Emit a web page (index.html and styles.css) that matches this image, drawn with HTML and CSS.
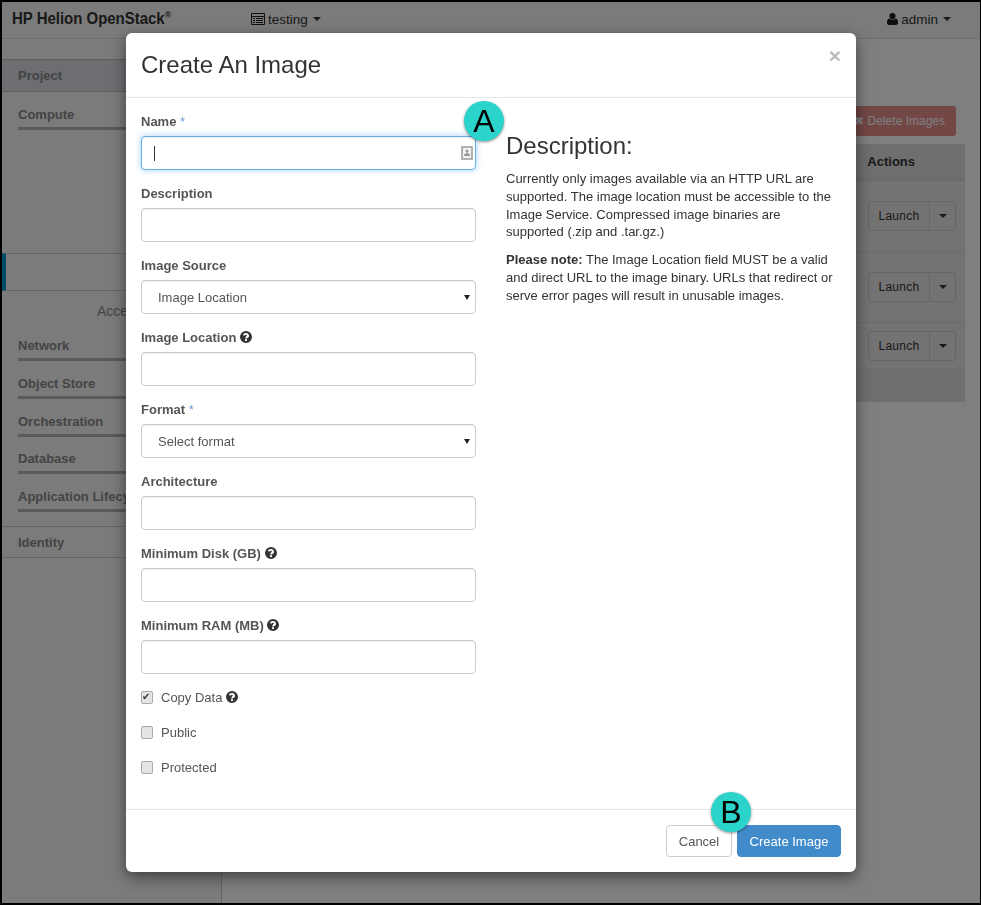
FILE: index.html
```html
<!DOCTYPE html>
<html lang="en">
<head>
<meta charset="UTF-8">
<meta name="viewport" content="width=device-width, initial-scale=1.0">
<title>Create An Image</title>
<link rel="stylesheet" href="styles.css">
</head>
<body>
<div class="frame">
    <header class="navbar">
        <div class="brand">HP Helion OpenStack<sup>®</sup></div>
        <div class="project-picker">
            <svg class="nav-icon" viewBox="0 0 14 12" width="14" height="12"><path fill="#1c1c1c" d="M1 0h12a1 1 0 0 1 1 1v10a1 1 0 0 1-1 1H1a1 1 0 0 1-1-1V1a1 1 0 0 1 1-1zm0 1v2h12V1H1zm0 3v7h12V4H1zm1 1h2v1H2V5zm3 0h7v1H5V5zM2 7h2v1H2V7zm3 0h7v1H5V7zM2 9h2v1H2V9zm3 0h7v1H5V9z"/></svg>
            testing <span class="caret"></span>
        </div>
        <div class="user-menu">
            <svg class="nav-icon" viewBox="0 0 11 12" width="11" height="12"><path fill="#1c1c1c" d="M5.500 0a3 3 0 0 1 3 3.200 3 3 0 0 1-6 0 3 3 0 0 1 3-3.200zM2.300 5.600c.8.800 1.900 1.200 3.200 1.200s2.400-.4 3.200-1.200C10.200 5.800 11 7.200 11 9.800c0 1.300-.8 2.200-2 2.200H2c-1.200 0-2-.9-2-2.200 0-2.600.8-4 2.300-4.200z"/></svg>
            admin <span class="caret"></span>
        </div>
    </header>
    <div class="main">
        <nav class="sidebar">
            <div class="side-head">Project</div>
            <div class="side-group">Compute</div>
            <div class="side-active"></div>
            <div class="side-sub">Access &amp; Security</div>
            <div class="side-item">Network</div>
            <div class="side-item">Object Store</div>
            <div class="side-item">Orchestration</div>
            <div class="side-item">Database</div>
            <div class="side-item">Application Lifecycle</div>
            <div class="side-identity">Identity</div>
        </nav>
        <section class="content">
            <div class="table-actions">
                <button class="btn-danger" disabled>✖ Delete Images</button>
            </div>
            <div class="images-table">
                <div class="table-head">Actions</div>
                <div class="table-row"><div class="split"><span>Launch</span><span class="split-caret"><span class="caret"></span></span></div></div>
                <div class="table-row"><div class="split"><span>Launch</span><span class="split-caret"><span class="caret"></span></span></div></div>
                <div class="table-row short"><div class="split"><span>Launch</span><span class="split-caret"><span class="caret"></span></span></div></div>
                <div class="table-foot"></div>
            </div>
        </section>
    </div>
</div>

<div class="backdrop"></div>

<div class="modal">
    <div class="modal-header">
        <h3>Create An Image</h3>
        <span class="close">×</span>
    </div>
    <div class="modal-body">
        <form class="image-form">
            <div class="form-group">
                <label>Name <span class="req">*</span></label>
                <div class="input-wrap">
                    <input type="text" class="focused">
                    <span class="text-cursor"></span>
                    <svg class="contact-icon" viewBox="0 0 12 14" width="12" height="14"><path fill="#f2f2f2" stroke="#999" stroke-width="1.500" d="M1 1h10v12H1z"/><path fill="#999" d="M6 3.500a1.500 1.500 0 1 1 0 3 1.500 1.500 0 0 1 0-3zM3 10c0-1.800 1.200-3 3-3s3 1.200 3 3z"/></svg>
                </div>
            </div>
            <div class="form-group">
                <label>Description</label>
                <input type="text">
            </div>
            <div class="form-group">
                <label>Image Source</label>
                <div class="select-wrap">
                    <select><option>Image Location</option></select>
                </div>
            </div>
            <div class="form-group">
                <label>Image Location <svg class="help" viewBox="0 0 12 12" width="12" height="12"><use href="#help-icon"/></svg></label>
                <input type="text">
            </div>
            <div class="form-group">
                <label>Format <span class="req">*</span></label>
                <div class="select-wrap">
                    <select><option>Select format</option></select>
                </div>
            </div>
            <div class="form-group">
                <label>Architecture</label>
                <input type="text">
            </div>
            <div class="form-group">
                <label>Minimum Disk (GB) <svg class="help" viewBox="0 0 12 12" width="12" height="12"><use href="#help-icon"/></svg></label>
                <input type="text">
            </div>
            <div class="form-group">
                <label>Minimum RAM (MB) <svg class="help" viewBox="0 0 12 12" width="12" height="12"><use href="#help-icon"/></svg></label>
                <input type="text">
            </div>
            <label class="check-row"><input type="checkbox" checked> Copy Data <svg class="help" viewBox="0 0 12 12" width="12" height="12"><use href="#help-icon"/></svg></label>
            <label class="check-row"><input type="checkbox"> Public</label>
            <label class="check-row"><input type="checkbox"> Protected</label>
        </form>
        <div class="description">
            <h3>Description:</h3>
            <p>Currently only images available via an HTTP URL are supported. The image location must be accessible to the Image Service. Compressed image binaries are supported (.zip and .tar.gz.)</p>
            <p><strong>Please note:</strong> The Image Location field MUST be a valid and direct URL to the image binary. URLs that redirect or serve error pages will result in unusable images.</p>
        </div>
    </div>
    <div class="modal-footer">
        <button class="btn-cancel">Cancel</button>
        <button class="btn-primary">Create Image</button>
    </div>
    <div class="callout callout-a">A</div>
    <div class="callout callout-b">B</div>
</div>

<svg class="defs" width="0" height="0">
    <symbol id="help-icon" viewBox="0 0 12 12">
        <path fill="#333" fill-rule="evenodd" d="M6 0a6 6 0 1 1 0 12A6 6 0 0 1 6 0zM5 8.300v1.700h2V8.300H5zM6 2C4.500 2 3.400 2.700 3 3.900l1.500.8c.2-.6.700-1 1.400-1 .6 0 1 .3 1 .7 0 .5-.4.700-.9 1C5.300 6.800 5 7.200 5 7.600h2c0-.3.200-.5.700-.8.700-.4 1.300-1 1.300-1.900C9 3.100 7.600 2 6 2z"/>
    </symbol>
</svg>
</body>
</html>
```
FILE: styles.css
```css
* {
    box-sizing: border-box;
}
body {
    margin: 0;
    font-family: "Liberation Sans", Arial, sans-serif;
    font-size: 13px;
    color: #333;
    background-color: #fff;
}
.frame {
    display: flex;
    flex-direction: column;
    width: 981px;
    height: 905px;
    border: solid #000;
    border-width: 2px 1px 2px 2px;
    overflow: hidden;
}
.navbar {
    display: flex;
    align-items: center;
    flex-shrink: 0;
    height: 37px;
    padding-bottom: 2px;
    background-color: #f6f6f6;
    border-bottom: 1px solid #ddd;
    color: #333;
}
.brand {
    flex-shrink: 0;
    width: 249px;
    padding-left: 10.700px;
    font-size: 16px;
    font-weight: bold;
    white-space: nowrap;
    transform: scaleX(0.935);
    transform-origin: left center;
}
.brand sup {
    font-size: 9px;
    line-height: 0;
}
.project-picker {
    display: flex;
    align-items: center;
    gap: 3px;
    font-size: 13.500px;
}
.user-menu {
    display: flex;
    align-items: center;
    gap: 3px;
    margin-left: auto;
    margin-right: 29px;
    font-size: 13.500px;
}
.caret {
    display: inline-block;
    width: 0;
    height: 0;
    margin-left: 2px;
    border-top: 4px solid #333;
    border-left: 4px solid transparent;
    border-right: 4px solid transparent;
}
.main {
    display: flex;
    flex: 1;
}
.sidebar {
    flex-shrink: 0;
    width: 220px;
    border-right: 1px solid #ccc;
    background-color: #f6f6f6;
    color: #888;
    font-weight: bold;
}
.side-head {
    height: 33px;
    margin-top: 20px;
    padding: 6px 16px 4px;
    line-height: 20px;
    background-color: #d8dde3;
    border-top: 1px solid #bbb;
    border-bottom: 1px solid #bbb;
}
.side-group {
    margin: 13px 0 123px 16px;
    padding-bottom: 2px;
    line-height: 20px;
    border-bottom: 3px solid #b5b5b5;
}
.side-active {
    height: 38px;
    border-top: 1px solid #ccc;
    border-bottom: 1px solid #ccc;
    border-left: 4px solid #0096d6;
}
.side-sub {
    margin-top: 10px;
    padding-left: 95px;
    line-height: 20px;
    font-size: 14px;
    font-weight: normal;
}
.side-item {
    height: 37.750px;
    margin-left: 16px;
    padding-top: 1px;
    line-height: 20px;
    white-space: nowrap;
}
.side-item::after {
    content: "";
    display: block;
    height: 3px;
    margin-top: 2px;
    background-color: #b5b5b5;
}
.side-sub + .side-item {
    margin-top: 14px;
}
.side-identity {
    height: 32px;
    margin-top: 2px;
    padding: 6px 16px 4px;
    line-height: 20px;
    border-top: 1px solid #ccc;
    border-bottom: 1px solid #ccc;
}
.content {
    flex: 1;
    padding: 67px 15px 0 0;
    background-color: #fff;
}
.table-actions {
    display: flex;
    justify-content: flex-end;
    height: 38px;
    padding-right: 9px;
}
.btn-danger {
    height: 30px;
    width: 150px;
    padding: 0 11px;
    border: 0;
    border-radius: 3px;
    background-color: #d9534f;
    color: #fff;
    font: inherit;
    font-size: 12px;
    text-align: right;
    opacity: 0.65;
}
.images-table {
    border: 1px solid #ddd;
    background-color: #e7e7e7;
}
.table-head {
    height: 36px;
    padding-right: 49px;
    line-height: 33px;
    font-weight: bold;
    text-align: right;
    background-color: #dfdfdf;
    border-bottom: 3px double #ccc;
}
.table-row {
    display: flex;
    align-items: center;
    justify-content: flex-end;
    height: 71px;
    padding-right: 8px;
    border-bottom: 1px solid #d6d6d6;
}
.table-row.short {
    height: 47px;
}
.table-foot {
    height: 31px;
    background-color: #dfdfdf;
}
.split {
    display: flex;
    height: 30px;
    width: 88px;
    border: 1px solid #ccc;
    border-radius: 3px;
    font-size: 12px;
    line-height: 28px;
    text-align: center;
}
.split > span:first-child {
    flex: 1;
    letter-spacing: .3px;
    border-right: 1px solid #ccc;
}
.split-caret {
    display: flex;
    align-items: center;
    justify-content: center;
    width: 25px;
}
.split-caret .caret {
    margin: 0;
}
.backdrop {
    position: fixed;
    inset: 0;
    background-color: rgba(0, 0, 0, 0.5);
}
.modal {
    position: absolute;
    left: 126px;
    top: 33px;
    width: 730px;
    background-color: #fff;
    border-radius: 6px;
    box-shadow: 0 5px 15px rgba(0, 0, 0, 0.5);
}
.modal-header {
    display: flex;
    justify-content: space-between;
    height: 65px;
    padding: 19px 15px 0;
    border-bottom: 1px solid #e5e5e5;
}
.modal-header h3 {
    margin: 0;
    font-size: 24px;
    font-weight: normal;
    line-height: 26px;
}
.close {
    margin-top: -7px;
    color: #bbb;
    font-size: 21px;
    font-weight: bold;
    line-height: 21px;
}
.modal-body {
    display: flex;
    gap: 30px;
    padding: 13px 15px 32px;
}
.image-form {
    width: 335px;
    flex-shrink: 0;
}
.description {
    padding-top: 22px;
    line-height: 17.750px;
}
.description h3 {
    margin: 0 0 11px;
    font-size: 24px;
    font-weight: normal;
    line-height: 26px;
}
.description p {
    margin: 0 0 10px;
}
.form-group {
    margin-bottom: 13px;
}
.form-group label {
    display: block;
    height: 20px;
    margin-bottom: 5px;
    padding-top: 1px;
    color: #555;
    font-weight: bold;
    line-height: 20px;
}
.req {
    color: #6d9fd6;
    font-weight: normal;
}
.help {
    vertical-align: -1px;
}
input[type="text"],
select {
    display: block;
    width: 100%;
    height: 34px;
    padding: 6px 12px;
    background-color: #fff;
    border: 1px solid #ccc;
    border-radius: 4px;
    box-shadow: inset 0 1px 1px rgba(0, 0, 0, 0.075);
}
input.focused {
    border-color: #66afe9;
    box-shadow: inset 0 1px 1px rgba(0, 0, 0, 0.075), 0 0 6px rgba(102, 175, 233, 0.6);
}
select {
    appearance: none;
    padding: 6px 12px 6px 16px;
    font: inherit;
    color: #555;
}
.input-wrap,
.select-wrap {
    position: relative;
}
.select-wrap::after {
    content: "";
    position: absolute;
    right: 6px;
    top: 15px;
    border-top: 5px solid #222;
    border-left: 3.500px solid transparent;
    border-right: 3.500px solid transparent;
}
.text-cursor {
    position: absolute;
    left: 13px;
    top: 10px;
    width: 1px;
    height: 15px;
    background-color: #333;
}
.contact-icon {
    position: absolute;
    right: 3px;
    top: 10px;
}
.check-row {
    display: flex;
    align-items: center;
    gap: 7px;
    height: 20px;
    margin-bottom: 15px;
    color: #555;
}
.check-row:last-child {
    margin-bottom: 0;
}
.check-row .help {
    margin-left: -3px;
}
.check-row input {
    appearance: none;
    position: relative;
    width: 12px;
    height: 13px;
    margin: 0 1px 0 0;
    background-color: #e4e4e4;
    border: 1px solid #aaa;
    border-radius: 2px;
}
.check-row input:checked::after {
    content: "✔";
    position: absolute;
    left: 0;
    top: -2px;
    font-size: 10px;
    line-height: 14px;
    color: #333;
}
.modal-footer {
    display: flex;
    justify-content: flex-end;
    gap: 5px;
    padding: 15px;
    border-top: 1px solid #e5e5e5;
}
.btn-cancel,
.btn-primary {
    height: 32px;
    border-radius: 4px;
    font: inherit;
}
.btn-cancel {
    width: 66px;
    background-color: #fff;
    border: 1px solid #ccc;
    color: #555;
}
.btn-primary {
    width: 104px;
    background-color: #428bca;
    border: 1px solid #428bca;
    color: #fff;
}
.callout {
    position: absolute;
    width: 40px;
    height: 40px;
    border-radius: 50%;
    background-color: #2bd4ca;
    box-shadow: 0 1px 3px rgba(0, 0, 0, 0.45);
    color: #000;
    font-size: 32px;
    line-height: 40px;
    text-align: center;
}
.callout-a {
    left: 338px;
    top: 68px;
}
.callout-b {
    left: 585px;
    top: 759px;
}
.defs {
    position: absolute;
}
```
